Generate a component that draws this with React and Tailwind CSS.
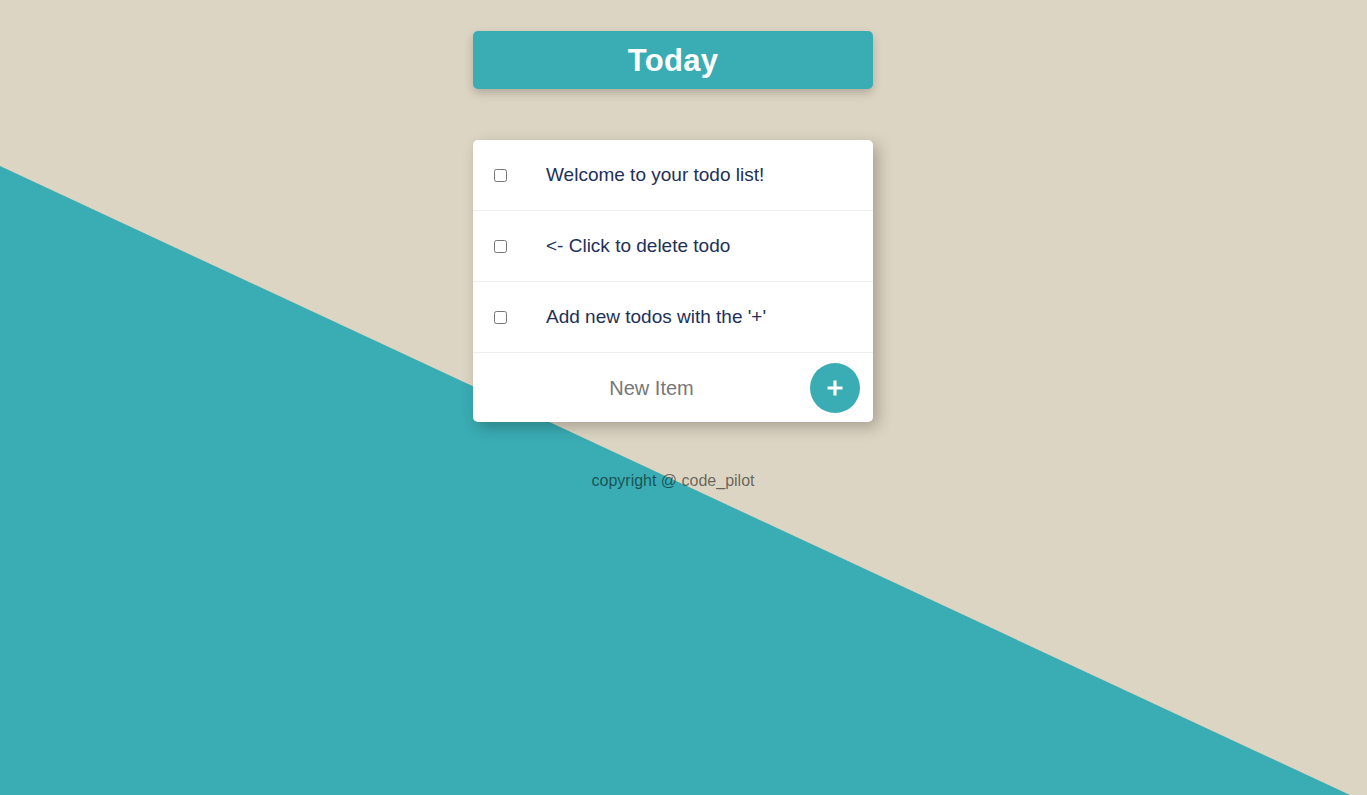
import React, { useState } from "react";

const initialTodos = [
    { id: 1, text: "Welcome to your todo list!" },
    { id: 2, text: "<- Click to delete todo" },
    { id: 3, text: "Add new todos with the '+'" },
];

const App = () => {
    const [todos] = useState(initialTodos);

    return (
        <div className="relative min-h-[795px] overflow-hidden bg-[#ddd5c3] font-['Liberation_Sans',Arial,sans-serif] pr-[21px]">
            {/* Diagonal background shape */}
            <svg
                className="absolute inset-0 w-full h-full"
                viewBox="0 0 1367 795"
                preserveAspectRatio="none"
            >
                <polygon points="0,166 1350,795 0,795" fill="#3aacb3" />
            </svg>

            <div className="relative mx-auto w-[400px] pt-[31px] flex flex-col">
                {/* Heading */}
                <div className="h-[58px] pt-[3px] rounded-[5px] bg-[#3aacb3] flex items-center justify-center shadow-[0_4px_10px_rgba(0,0,0,0.2)]">
                    <h1 className="text-[31px] font-bold text-white tracking-[0.3px]">Today</h1>
                </div>

                {/* Todo card */}
                <div className="mt-[51px] bg-white rounded-[5px] shadow-[5px_5px_15px_rgba(0,0,0,0.25)]">
                    {todos.map((todo) => (
                        <div key={todo.id} className="h-[71px] flex items-center border-b border-[#eeeeee]">
                            <input type="checkbox" className="ml-[21px] w-[13px] h-[13px]" />
                            <p className="ml-[39px] text-[19px] text-[#22305a]">{todo.text}</p>
                        </div>
                    ))}
                    <form className="h-[69px] flex items-center">
                        <input
                            type="text"
                            placeholder="New Item"
                            className="flex-1 text-center text-[20px] bg-transparent outline-none placeholder:text-[#777777] pl-[20px]"
                        />
                        <button
                            type="button"
                            className="mr-[13px] w-[50px] h-[50px] rounded-full bg-[#3aacb3] text-white flex items-center justify-center"
                        >
                            <svg className="w-[18px] h-[18px]" viewBox="0 0 18 18">
                                <path d="M9 1.5v15M1.5 9h15" stroke="currentColor" strokeWidth={3.2} strokeLinecap="butt" />
                            </svg>
                        </button>
                    </form>
                </div>

                <footer className="mt-[47px] text-center text-[16px] text-black/55">
                    copyright @ code_pilot
                </footer>
            </div>
        </div>
    );
};

export default App;
